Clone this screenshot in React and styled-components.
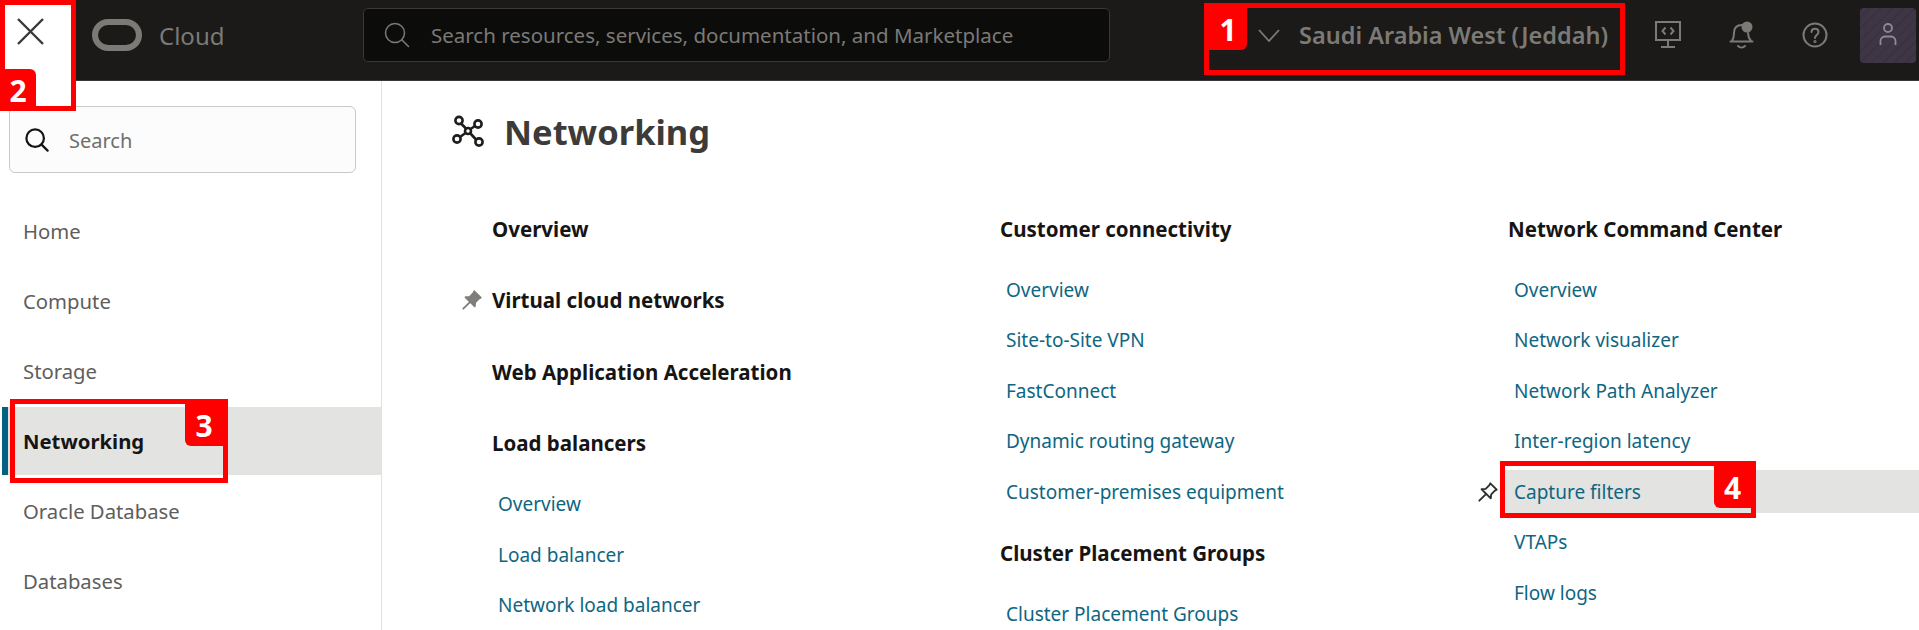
import React from 'react';
import styled, { createGlobalStyle } from 'styled-components';

const Global = createGlobalStyle`
  html, body { margin: 0; padding: 0; background: #fff; overflow: hidden; }
  body { font-family: "Noto Sans", "Open Sans", sans-serif; }
  * { box-sizing: border-box; }
`;

const Page = styled.div`
  position: relative;
  width: 1919px;
  height: 630px;
  overflow: hidden;
`;

const Header = styled.header`
  display: flex;
  align-items: center;
  height: 81px;
  padding: 0 0 10px 92px;
  background: #1b1a19;
  border-bottom: 1px solid #3a3937;
`;

const Brand = styled.div`
  display: flex;
  align-items: center;
  gap: 17px;
  width: 271px;
  color: #7b7a77;
  font-size: 24px;
`;

const SearchBar = styled.div`
  display: flex;
  align-items: center;
  gap: 21px;
  width: 747px;
  height: 54px;
  padding-left: 20px;
  background: #0c0c0b;
  border: 1px solid #393836;
  border-radius: 5px;
  color: #7b7a77;
  font-size: 20.5px;
`;

const Region = styled.div`
  display: flex;
  align-items: center;
  gap: 19px;
  margin-left: 148px;
  width: 397px;
  color: #7b7a77;
  font-size: 23.5px;
  font-weight: 600;
`;

const HeaderIcons = styled.div`
  display: flex;
  align-items: center;
  gap: 48px;
`;

const Avatar = styled.div`
  display: flex;
  align-items: center;
  justify-content: center;
  width: 56px;
  height: 55px;
  margin-left: -16px;
  border-radius: 4px;
  background: repeating-linear-gradient(135deg, #3e3545 0 6px, #3a3240 6px 8px);
`;

const Body = styled.div`
  display: flex;
  height: 549px;
`;

const Sidebar = styled.aside`
  width: 382px;
  flex: none;
  padding-top: 25px;
  border-right: 1px solid #e2e2e0;
`;

const SideSearch = styled.div`
  display: flex;
  align-items: center;
  gap: 20px;
  width: 347px;
  height: 67px;
  margin: 0 0 24px 9px;
  padding: 1px 0 0 15px;
  background: #fcfcfc;
  border: 1px solid #c9c9c7;
  border-radius: 6px;
  color: #6f6e6c;
  font-size: 20px;
`;

const Nav = styled.nav`
  display: flex;
  flex-direction: column;
  gap: 2px;
`;

const NavItem = styled.div`
  display: flex;
  align-items: center;
  height: 68px;
  margin-left: 2px;
  padding-left: 15px;
  border-left: 6px solid ${p => (p.$active ? '#04617f' : 'transparent')};
  background: ${p => (p.$active ? '#e3e3e1' : 'transparent')};
  color: ${p => (p.$active ? '#161513' : '#5f5e5c')};
  font-size: 20.3px;
  font-weight: ${p => (p.$active ? 700 : 400)};
`;

const Main = styled.main`
  flex: 1;
`;

const TitleRow = styled.div`
  display: flex;
  align-items: center;
  gap: 20px;
  height: 112px;
  padding: 0 0 12px 70px;
`;

const Title = styled.h1`
  margin: 0;
  color: #3c3b39;
  font-size: 34.5px;
  font-weight: 700;
`;

const Columns = styled.div`
  display: grid;
  grid-template-columns: 508px 508px 1fr;
  padding-left: 110px;
`;

const Heading = styled.div`
  display: flex;
  align-items: center;
  height: 71.5px;
  color: #161513;
  font-size: 20.5px;
  font-weight: 700;
`;

const LinkRow = styled.div`
  display: flex;
  align-items: center;
  height: 50.5px;
`;

const LinkText = styled.a`
  display: flex;
  align-items: center;
  flex: ${p => (p.$selected ? 1 : 'none')};
  height: 43px;
  padding-left: ${p => (p.$selected ? 9 : 6)}px;
  margin-left: ${p => (p.$selected ? -3 : 0)}px;
  background: ${p => (p.$selected ? '#e3e3e1' : 'transparent')};
  color: #0e6682;
  font-size: 19px;
`;

const PinSlot = styled.span`
  display: flex;
  width: 22px;
  margin-left: ${p => p.$left}px;
  margin-right: ${p => p.$right}px;
`;

const Annotation = styled.div`
  position: absolute;
  left: ${p => p.$x}px;
  top: ${p => p.$y}px;
  width: ${p => p.$w}px;
  height: ${p => p.$h}px;
  border: 5px solid #fe0000;
  background: ${p => (p.$fill ? '#fff' : 'transparent')};
`;

const Badge = styled.div`
  position: absolute;
  display: flex;
  align-items: center;
  justify-content: center;
  width: ${p => p.$w}px;
  height: 42px;
  background: #fe0000;
  color: #fff;
  font-size: 30px;
  font-weight: 700;
  ${p => p.$corner};
`;

const CloseIcon = styled.svg`
  position: absolute;
  left: 12px;
  top: 13px;
`;

const Pin = ({ filled, color }) => (
  <svg width="22" height="22" viewBox="0 0 24 24" fill={filled ? color : 'none'} stroke={color} strokeWidth="2" strokeLinejoin="round" strokeLinecap="round">
    <path d="M14.5 2.5 21.5 9.5 19.5 10.5 15.5 14.5 15 19 5 9 9.5 8.5 13.5 4.5Z" />
    <path d="M9.5 14.5 2.5 21.5" />
  </svg>
);

const SearchIcon = ({ color, size, width }) => (
  <svg width={size} height={size} viewBox="0 0 26 26" fill="none" stroke={color} strokeWidth={width} strokeLinecap="round">
    <circle cx="11" cy="11" r="9.5" />
    <path d="M18 18 24.5 24.5" />
  </svg>
);

const NetworkIcon = () => (
  <svg width="32" height="32" viewBox="0 0 32 32" fill="none" stroke="#1f1e1c" strokeWidth="2.6">
    <circle cx="7" cy="5.5" r="3.6" />
    <circle cx="26" cy="9" r="3.6" />
    <circle cx="5" cy="24" r="3.6" />
    <circle cx="27" cy="27" r="3.6" />
    <circle cx="16" cy="16" r="3" />
    <path d="M9 8.5 14 13.5M23 11 18.5 14M8 22 13.5 18M24 24.5 18.5 18.5" />
  </svg>
);

const Monitor = () => (
  <svg width="26" height="28" viewBox="0 0 26 28" fill="none" stroke="#7b7a77" strokeWidth="2">
    <rect x="1" y="1" width="24" height="18" />
    <path d="M10.5 6.5 7.5 10 10.5 13.5M15.5 6.5 18.5 10 15.5 13.5M13 19V25M6 26H20" />
  </svg>
);

const Bell = () => (
  <svg width="25" height="28" viewBox="0 0 25 28" fill="none" stroke="#7b7a77" strokeWidth="2" strokeLinecap="round">
    <path d="M3 20C5 17 5 15 5 12 5 7 8 4 13 4M19 12C19 15 19.500 17 22 20M1.500 20.500H23.500M9 25C11 27 14 27 16 25" />
    <circle cx="18" cy="6" r="5.500" fill="#7b7a77" stroke="none" />
  </svg>
);

const Help = () => (
  <svg width="26" height="26" viewBox="0 0 26 26" fill="none" stroke="#7b7a77" strokeWidth="2" strokeLinecap="round">
    <circle cx="13" cy="13" r="11.500" />
    <path d="M9.500 10C9.500 5.500 16.500 5.500 16.500 10 16.500 13 13 13 13 16" />
    <circle cx="13" cy="19.500" r="0.600" />
  </svg>
);

const Person = () => (
  <svg width="18" height="26" viewBox="0 0 18 26" fill="none" stroke="#8f8a94" strokeWidth="1.800">
    <circle cx="9" cy="6" r="4" />
    <path d="M1.500 23V19C1.500 16 4 14.500 6.500 14.500H11.500C14 14.500 16.500 16 16.500 19V23" />
  </svg>
);

const columns = [
  [
    { h: 'Overview' },
    { h: 'Virtual cloud networks', pin: true },
    { h: 'Web Application Acceleration' },
    { h: 'Load balancers' },
    { l: 'Overview' },
    { l: 'Load balancer' },
    { l: 'Network load balancer' }
  ],
  [
    { h: 'Customer connectivity' },
    { l: 'Overview' },
    { l: 'Site-to-Site VPN' },
    { l: 'FastConnect' },
    { l: 'Dynamic routing gateway' },
    { l: 'Customer-premises equipment' },
    { h: 'Cluster Placement Groups' },
    { l: 'Cluster Placement Groups' }
  ],
  [
    { h: 'Network Command Center' },
    { l: 'Overview' },
    { l: 'Network visualizer' },
    { l: 'Network Path Analyzer' },
    { l: 'Inter-region latency' },
    { l: 'Capture filters', selected: true },
    { l: 'VTAPs' },
    { l: 'Flow logs' }
  ]
];

const navItems = ['Home', 'Compute', 'Storage', 'Networking', 'Oracle Database', 'Databases'];

export default function App() {
  return (
    <Page>
      <Global />
      <Header>
        <Brand>
          <svg width="50" height="32" viewBox="0 0 50 32" fill="none" stroke="#7b7a77" strokeWidth="6">
            <rect x="3" y="3" width="44" height="26" rx="13" />
          </svg>
          Cloud
        </Brand>
        <SearchBar>
          <SearchIcon color="#7b7a77" size={26} width={1.5} />
          Search resources, services, documentation, and Marketplace
        </SearchBar>
        <Region>
          <svg width="22" height="13" viewBox="0 0 22 13" fill="none" stroke="#7b7a77" strokeWidth="1.800">
            <path d="M1 1 11 12 21 1" />
          </svg>
          Saudi Arabia West (Jeddah)
        </Region>
        <HeaderIcons>
          <Monitor />
          <Bell />
          <Help />
          <Avatar>
            <Person />
          </Avatar>
        </HeaderIcons>
      </Header>
      <Body>
        <Sidebar>
          <SideSearch>
            <SearchIcon color="#161513" size={24} width={2.4} />
            Search
          </SideSearch>
          <Nav>
            {navItems.map(n => (
              <NavItem key={n} $active={n === 'Networking'}>{n}</NavItem>
            ))}
          </Nav>
        </Sidebar>
        <Main>
          <TitleRow>
            <NetworkIcon />
            <Title>Networking</Title>
          </TitleRow>
          <Columns>
            {columns.map((col, i) => (
              <div key={i}>
                {col.map((item, j) =>
                  item.h ? (
                    <Heading key={j}>
                      {item.pin && (
                        <PinSlot $left={-31} $right={9}>
                          <Pin filled color="#7f7e7c" />
                        </PinSlot>
                      )}
                      {item.h}
                    </Heading>
                  ) : (
                    <LinkRow key={j}>
                      {item.selected && (
                        <PinSlot $left={-31} $right={9}>
                          <Pin color="#2d2c2a" />
                        </PinSlot>
                      )}
                      <LinkText $selected={item.selected}>{item.l}</LinkText>
                    </LinkRow>
                  )
                )}
              </div>
            ))}
          </Columns>
        </Main>
      </Body>

      <Annotation $x={1204} $y={3} $w={421} $h={72}>
        <Badge $w={38} $corner="left: 0; top: 0; border-bottom-right-radius: 6px;">1</Badge>
      </Annotation>
      <Annotation $x={0} $y={0} $w={76} $h={111} $fill>
        <CloseIcon width="27" height="27" viewBox="0 0 27 27" fill="none" stroke="#3a3937" strokeWidth="2.4">
          <path d="M1 1 26 26M26 1 1 26" />
        </CloseIcon>
        <Badge $w={36} $corner="left: -5px; bottom: -5px; border-top-right-radius: 6px;">2</Badge>
      </Annotation>
      <Annotation $x={10} $y={399} $w={218} $h={84}>
        <Badge $w={38} $corner="right: 0; top: 0; border-bottom-left-radius: 6px;">3</Badge>
      </Annotation>
      <Annotation $x={1500} $y={461} $w={256} $h={57}>
        <Badge $w={37} $corner="right: 0; top: 0; border-bottom-left-radius: 6px;">4</Badge>
      </Annotation>
    </Page>
  );
}
